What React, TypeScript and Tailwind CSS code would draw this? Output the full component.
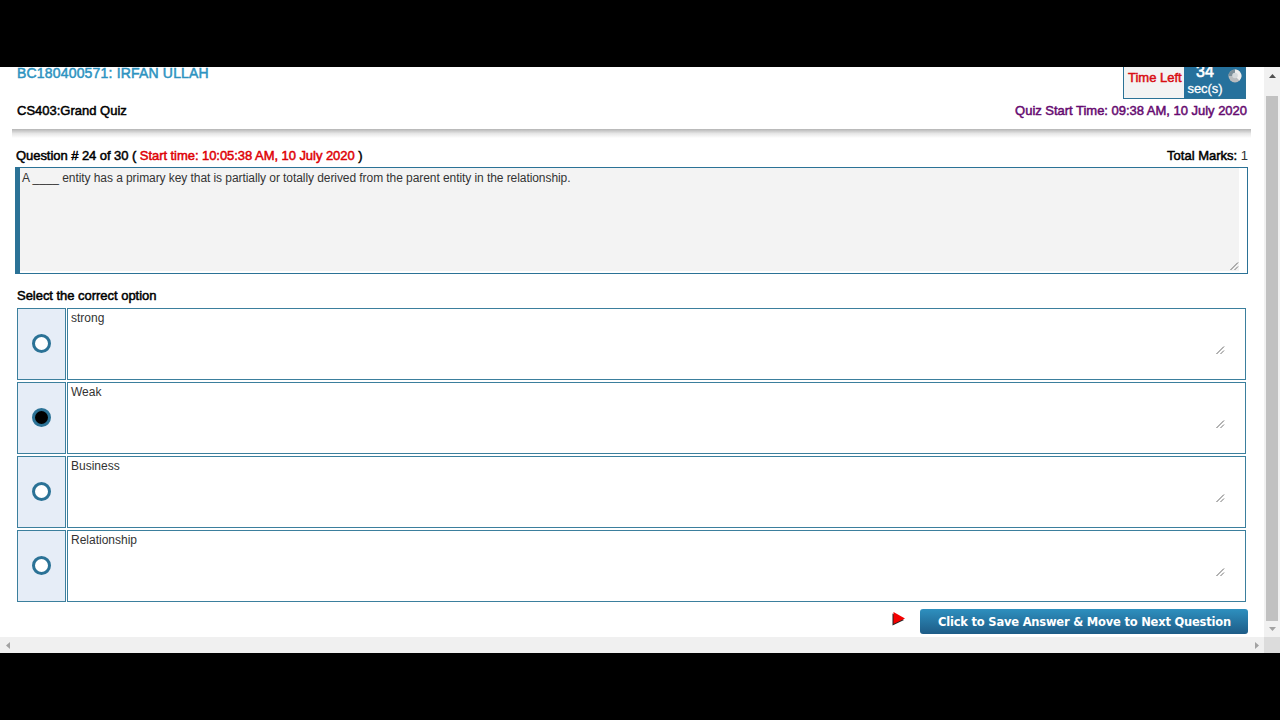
import React from "react";

const options = ["strong", "Weak", "Business", "Relationship"];

function Grip() {
  return (
    <svg width="9" height="9" viewBox="0 0 9 9" className="block" fill="none" strokeWidth="1">
      <path d="M0.500 8L8 0.500" stroke="#666" />
      <path d="M4.500 8L8 4.500" stroke="#777" />
    </svg>
  );
}

function Radio({ checked }: { checked: boolean }) {
  return (
    <span
      className={
        "mb-[2px] block size-[19px] rounded-full border-3 border-[#2b7296] " + (checked ? "bg-black" : "bg-white")
      }
    />
  );
}

function VerticalScrollbar() {
  return (
    <div className="flex w-4 shrink-0 flex-col items-center bg-[#f1f1f1]">
      <div className="flex h-[29px] w-full items-start justify-center pt-[7px]">
        <svg width="7" height="4" viewBox="0 0 7 4"><path d="M0 4L3.5 0L7 4Z" fill="#505050" /></svg>
      </div>
      <div className="h-[525px] w-3 bg-[#c1c1c1]" />
      <div className="pt-[6px]">
        <svg width="7" height="4" viewBox="0 0 7 4" className="block"><path d="M0 0L3.5 4L7 0Z" fill="#a3a3a3" /></svg>
      </div>
    </div>
  );
}

export default function App() {
  return (
    <div className="flex h-[720px] w-[1280px] flex-col overflow-hidden bg-black py-[67px] font-['Liberation_Sans',Arial,sans-serif] text-[13px] leading-4 text-black">
      <div className="flex h-[570px]">
        <main className="w-[1264px] overflow-hidden bg-white">
          <header className="flex h-[62px] justify-between pl-[17px] pr-[17px]">
            <div>
              <div className="-mt-[2px] text-[14px] tracking-[0.18px] whitespace-nowrap text-[#2d93c1] [-webkit-text-stroke:0.5px_#2d93c1]">
                BC180400571: IRFAN ULLAH
              </div>
              <div className="mt-[22px] whitespace-nowrap [-webkit-text-stroke:0.5px_#000]">CS403:Grand Quiz</div>
            </div>
            <div className="flex flex-col items-end">
              <div className="mr-px flex h-8 w-[123px] border border-t-0 border-[#2b7296] bg-[#f3f3f3]">
                <div className="w-[60px] pt-[3px] pl-1 whitespace-nowrap text-[#d90d12] [-webkit-text-stroke:0.5px_#d90d12]">
                  Time Left
                </div>
                <div className="flex flex-1 bg-[#26719c] text-white">
                  <div className="flex w-[42px] flex-col items-center">
                    <span className="-mt-[3px] text-[16px] leading-4 [-webkit-text-stroke:0.6px_#fff]">34</span>
                    <span className="mt-px text-[13px] leading-4 tracking-[-0.1px] [-webkit-text-stroke:0.3px_#fff]">sec(s)</span>
                  </div>
                  <svg width="14" height="14" viewBox="0 0 14 14" className="mt-[2px] ml-[2px]">
                    <circle cx="7" cy="7" r="6.500" fill="#b9bcbf" />
                    <path d="M7 .5A6.500 6.500 0 0 1 11.500 11.500L7 7Z" fill="#eeeeee" />
                    <path d="M.5 7A6.500 6.500 0 0 1 7 .5L7 7Z" fill="#7d8f9a" />
                    <circle cx="7" cy="6.500" r="2.800" fill="#d5d9dc" />
                  </svg>
                </div>
              </div>
              <div className="mt-[4px] tracking-[-0.02px] whitespace-nowrap text-[#660a70] [-webkit-text-stroke:0.5px_#660a70]">
                Quiz Start Time: 09:38 AM, 10 July 2020
              </div>
            </div>
          </header>
          <div className="mr-[13px] ml-3 h-[9px] bg-linear-to-b from-[#b5b5b5] via-[#e6e6e6] to-white" />

          <div className="mt-[10px] flex h-[19px] justify-between pr-4 pl-4 whitespace-nowrap">
            <div className="tracking-[-0.055px] [-webkit-text-stroke:0.5px]">
              Question # 24 of 30 ( <span className="text-[#de0005]">Start time: 10:05:38 AM, 10 July 2020</span> )
            </div>
            <div>
              <span className="[-webkit-text-stroke:0.5px]">Total Marks:</span> <span className="text-[#333]">1</span>
            </div>
          </div>

          <section className="mr-4 ml-[15px] h-[107px] border border-l-5 border-[#2b7296] bg-white">
            <div className="flex h-[103px] w-[1219px] flex-col justify-between bg-[#f3f3f3]">
              <p className="pt-[2px] pl-[2px] text-[12px] tracking-[-0.07px] whitespace-nowrap text-[#333]">
                A ____ entity has a primary key that is partially or totally derived from the parent entity in the relationship.
              </p>
              <div className="self-end"><Grip /></div>
            </div>
          </section>

          <h2 className="mt-[14px] h-[20px] pl-[17px] tracking-[-0.03px] [-webkit-text-stroke:0.5px]">Select the correct option</h2>
          <div className="mr-[18px] ml-[17px] flex flex-col gap-[2px]">
            {options.map((option, index) => (
              <label key={option} className="flex h-[72px] gap-px">
                <span className="flex w-[49px] items-center justify-center border border-[#3b7f9d] bg-[#e6edf7]">
                  <Radio checked={index === 1} />
                </span>
                <span className="flex flex-1 justify-between border border-[#3b7f9d] pl-[3px] text-[#333]">
                  <span className="pt-px text-[12px]">{option}</span>
                  <span className="mt-[37px] mr-5"><Grip /></span>
                </span>
              </label>
            ))}
          </div>
          <div className="mt-[7px] flex justify-end pr-4">
            <svg width="14" height="14" viewBox="0 0 14 14" className="mt-[3px] mr-[14px]">
              <path d="M.5 1.500V13.500L12 8Z" fill="#222" />
              <path d="M1.500 0V12L13 6.500Z" fill="#f40000" />
            </svg>
            <button className="h-[25px] w-[328px] rounded-[3px] bg-linear-to-b from-[#2e90bf] to-[#1e5c87] pl-px font-['DejaVu_Sans',Verdana,sans-serif] text-[11.5px] font-bold tracking-[-0.21px] whitespace-nowrap text-white">
              Click to Save Answer &amp; Move to Next Question
            </button>
          </div>
        </main>
        <VerticalScrollbar />
      </div>
      <div className="flex h-4 bg-[#f0f0f0]">
        <div className="flex w-[1264px] items-center justify-between pr-[5px] pl-[6px]">
          <svg width="4" height="7" viewBox="0 0 4 7"><path d="M4 0L0 3.500L4 7Z" fill="#a3a3a3" /></svg>
          <svg width="4" height="7" viewBox="0 0 4 7"><path d="M0 0L4 3.500L0 7Z" fill="#a3a3a3" /></svg>
        </div>
        <div className="w-4 bg-[#dcdcdc]" />
      </div>
    </div>
  );
}
